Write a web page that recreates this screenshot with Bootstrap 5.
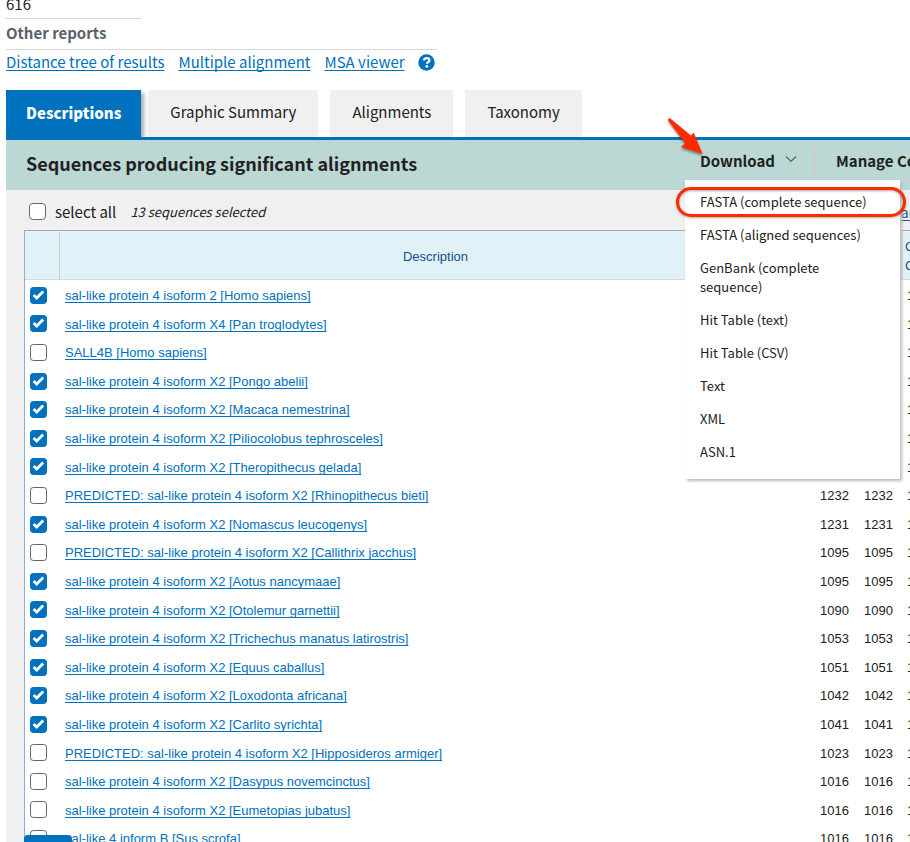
<!DOCTYPE html>
<html lang="en">
<head>
<meta charset="utf-8">
<meta name="viewport" content="width=device-width, initial-scale=1">
<title>BLAST results</title>
<link href="https://cdn.jsdelivr.net/npm/bootstrap@5.3.0/dist/css/bootstrap.min.css" rel="stylesheet">
<style>
  html, body { height: 100%; overflow: hidden; }
  body { font-family: "Noto Sans CJK SC", sans-serif; font-size: 15px; line-height: 20px; color: #212121; background: #fff; }
  .results { padding-left: 6px; }
  a.ulink { color: #0071bc; text-decoration: underline 1px; text-underline-offset: 2px; text-decoration-skip-ink: none; }

  .query-len { width: 136px; height: 19px; border-bottom: 1px solid #d6d7d9; padding-bottom: 4px; }
  .reports { width: 431px; height: 31px; padding-top: 4px; border-bottom: 1px solid #d6d7d9; color: #5b616b; font-weight: 700; font-size: 15px; line-height: 20px; }
  .report-links { height: 40px; padding-top: 2px; gap: 14px; }
  .help-btn { line-height: 0; margin-left: -1px; padding-top: 2px; }

  .tabs { border-bottom: 3px solid #0071bc; gap: 12px; }
  .tab-btn { height: 47px; background: #f0f0f0; padding: 0 22px 3px; color: #212121; }
  .tab-btn.current { background: #0071bc; color: #fff; font-weight: 900; padding: 0 20px 1px; box-shadow: 3px 3px 4px #aaa; margin-right: -5px; clip-path: inset(0 -8px 0 0); }

  .toolbar { background: #bcd8d4; height: 50px; padding-left: 20px; }
  .toolbar h1 { font-size: 18px; font-weight: 700; line-height: 24px; padding-bottom: 4px; }
  .tools { width: 225px; }
  .tool-btn { background: none; font-weight: 700; white-space: nowrap; color: #212121; padding: 2px 0 0 15px; height: 40px; }
  .tool-btn.next { padding-left: 19px; }
  .tool-rule { width: 4px; height: 34px; margin: 6px 0 0 14px; background: #cdcdcd; }
  .dl-menu { position: absolute; top: 40px; left: 0; width: 215px; background: #fff; z-index: 5; box-shadow: 2px 2px 3px #bbb; padding: 5px 0 11px; font-size: 13px; line-height: 19px; }
  .dl-menu a { padding: 7px 60px 7px 15px; color: #212121; }
  .dl-menu a.wide { padding-right: 0; }
  .callout { position: absolute; top: 47px; left: -9px; width: 230px; height: 30px; border: 3px solid #ff2a00; border-radius: 15px; z-index: 6; filter: drop-shadow(0 1px 1px #0005); pointer-events: none; }
  .pointer { position: absolute; top: -30px; left: -25px; z-index: 6; filter: drop-shadow(0 2px 1px #0006); pointer-events: none; }

  .panel { background: #f0f0f0; padding-left: 18px; }
  .select-row { height: 40px; padding: 3px 0 0 5px; }
  .select-row label { margin-left: 9px; }
  .select-row em { font-size: 13px; margin-left: 14px; }
  .select-row a { color: #13508c; font-size: 14px; margin-right: -4px; }
  input.tick { width: 17px; height: 17px; margin: 0; border: 1px solid #666; border-radius: 4px; background-color: #fff; vertical-align: middle; }
  input.tick:checked { background-color: #0071bc; border-color: #0071bc; background-size: 100% 100%;
    background-image: url("data:image/svg+xml,%3Csvg xmlns='http://www.w3.org/2000/svg' viewBox='0 0 15 15'%3E%3Cpath d='M2.6 7 5.7 10 12.2 3.6' fill='none' stroke='%23fff' stroke-width='2.8'/%3E%3C/svg%3E"); }
  .hits { width: calc(100% + 60px); table-layout: fixed; border-collapse: separate; border-spacing: 0; border: 1px solid #8fadcf; border-right: 0; background: #fff; font-family: "Liberation Sans", sans-serif; font-size: 13px; line-height: 2.2; }
  .hits th { background: #e1f1f8; color: #13508c; font-weight: 400; height: 49px; border-bottom: 1px solid #cfdce5; border-top: 2px solid #f0f0f0; line-height: 19px; text-align: center; padding: 0; }
  .hits th + th { border-left: 1px solid #cccccc; }
  .hits th.cover { text-align: left; padding-left: 3px; }
  .hits td { padding: 0 8px 0 6px; white-space: nowrap; }
  .hits tbody tr:first-child td { padding-top: 2px; }
  .hits tbody td.pick { padding: 0 0 2px 5px; line-height: 1; }
  .c-pick { width: 34px; }
  .c-max { width: 46px; }
  .c-total { width: 44px; }
  .c-rest { width: 69px; }
  .dl-cta { position: fixed; left: 24px; bottom: 0; width: 48px; height: 7px; background: #0071bc; border-radius: 4px 4px 0 0; }
</style>
<script src="https://cdn.jsdelivr.net/npm/bootstrap@5.3.0/dist/js/bootstrap.bundle.min.js"></script>
</head>
<body>
<main class="results">
  <div class="query-len d-flex align-items-end">616</div>
  <h2 class="reports m-0">Other reports</h2>
  <div class="report-links d-flex align-items-start">
    <a class="ulink" href="#">Distance tree of results</a>
    <a class="ulink" href="#">Multiple alignment</a>
    <a class="ulink" href="#">MSA viewer</a>
    <button class="help-btn border-0 bg-transparent px-0 pb-0" type="button" aria-label="Help">
      <svg width="17" height="17" viewBox="0 0 17 17"><circle cx="8.5" cy="8.5" r="8.2" fill="#0071bc"/><path d="M5.8 6.4C6.3 4.8 7.4 4.2 8.7 4.2c1.5 0 2.7.9 2.7 2.2 0 1.7-2.5 1.8-2.5 3.4" fill="none" stroke="#fff" stroke-width="2.3"/><circle cx="8.8" cy="12.4" r="1.4" fill="#fff"/></svg>
    </button>
  </div>

  <div class="tabs d-flex" role="tablist">
    <button class="tab-btn current border-0" type="button" role="tab" aria-selected="true">Descriptions</button>
    <button class="tab-btn border-0" type="button" role="tab">Graphic Summary</button>
    <button class="tab-btn border-0" type="button" role="tab">Alignments</button>
    <button class="tab-btn border-0" type="button" role="tab">Taxonomy</button>
  </div>

  <div class="toolbar d-flex justify-content-between align-items-center">
    <h1 class="m-0">Sequences producing significant alignments</h1>
    <div class="tools position-relative d-flex align-items-start align-self-start flex-shrink-0">
      <button class="tool-btn border-0 d-flex align-items-center" type="button" aria-expanded="true">Download
        <svg class="ms-2" width="16" height="16" viewBox="0 0 16 16"><path d="M3 3.5l5 5 5-5" fill="none" stroke="#5b616b" stroke-width="1.2"/></svg>
      </button>
      <div class="tool-rule flex-shrink-0"></div>
      <button class="tool-btn next border-0" type="button">Manage Columns</button>
      <nav class="dl-menu" aria-label="Download">
        <a class="wide d-block text-decoration-none" href="#">FASTA (complete sequence)</a>
        <a class="wide d-block text-decoration-none" href="#">FASTA (aligned sequences)</a>
        <a class="d-block text-decoration-none" href="#">GenBank (complete sequence)</a>
        <a class="d-block text-decoration-none" href="#">Hit Table (text)</a>
        <a class="d-block text-decoration-none" href="#">Hit Table (CSV)</a>
        <a class="d-block text-decoration-none" href="#">Text</a>
        <a class="d-block text-decoration-none" href="#">XML</a>
        <a class="d-block text-decoration-none" href="#">ASN.1</a>
      </nav>
      <div class="callout"></div>
      <svg class="pointer" width="48" height="50" viewBox="0 0 48 50"><path d="M8 10.2Q7.8 8 10.3 8.4L31 25.6 33.6 22.4 42.7 44 21 37 25.2 33.2Z" fill="#ff2a00"/></svg>
    </div>
  </div>

  <div class="panel">
    <div class="select-row d-flex align-items-center">
      <input class="form-check-input tick" type="checkbox" id="all"><label for="all">select all</label>
      <em>13 sequences selected</em>
      <a class="ulink ms-auto" href="#">ar</a>
    </div>
    <table class="hits">
      <colgroup><col class="c-pick"><col><col class="c-max"><col class="c-total"><col class="c-rest"></colgroup>
      <thead><tr><th></th><th>Description</th><th></th><th></th><th class="cover">Query<br>Cover</th></tr></thead>
      <tbody id="hitRows"></tbody>
    </table>
  </div>
</main>
<button class="dl-cta border-0 p-0" type="button" aria-label="Feedback"></button>

<script>
  const hits = [
    [1, "sal-like protein 4 isoform 2 [Homo sapiens]", ""],
    [1, "sal-like protein 4 isoform X4 [Pan troglodytes]", ""],
    [0, "SALL4B [Homo sapiens]", ""],
    [1, "sal-like protein 4 isoform X2 [Pongo abelii]", ""],
    [1, "sal-like protein 4 isoform X2 [Macaca nemestrina]", ""],
    [1, "sal-like protein 4 isoform X2 [Piliocolobus tephrosceles]", ""],
    [1, "sal-like protein 4 isoform X2 [Theropithecus gelada]", ""],
    [0, "PREDICTED: sal-like protein 4 isoform X2 [Rhinopithecus bieti]", 1232],
    [1, "sal-like protein 4 isoform X2 [Nomascus leucogenys]", 1231],
    [0, "PREDICTED: sal-like protein 4 isoform X2 [Callithrix jacchus]", 1095],
    [1, "sal-like protein 4 isoform X2 [Aotus nancymaae]", 1095],
    [1, "sal-like protein 4 isoform X2 [Otolemur garnettii]", 1090],
    [1, "sal-like protein 4 isoform X2 [Trichechus manatus latirostris]", 1053],
    [1, "sal-like protein 4 isoform X2 [Equus caballus]", 1051],
    [1, "sal-like protein 4 isoform X2 [Loxodonta africana]", 1042],
    [1, "sal-like protein 4 isoform X2 [Carlito syrichta]", 1041],
    [0, "PREDICTED: sal-like protein 4 isoform X2 [Hipposideros armiger]", 1023],
    [0, "sal-like protein 4 isoform X2 [Dasypus novemcinctus]", 1016],
    [0, "sal-like protein 4 isoform X2 [Eumetopias jubatus]", 1016],
    [0, "sal-like 4 inform B [Sus scrofa]", 1016]
  ];
  document.getElementById("hitRows").innerHTML = hits.map(([on, name, score], i) =>
    `<tr><td class="pick"><input class="form-check-input tick" type="checkbox" id="hit${i}" aria-label="${name}"${on ? " checked" : ""}></td>` +
    `<td><a class="ulink" href="#">${name}</a></td><td class="text-end">${score}</td><td class="text-end">${score}</td><td>100%</td></tr>`).join("");
</script>
</body>
</html>
